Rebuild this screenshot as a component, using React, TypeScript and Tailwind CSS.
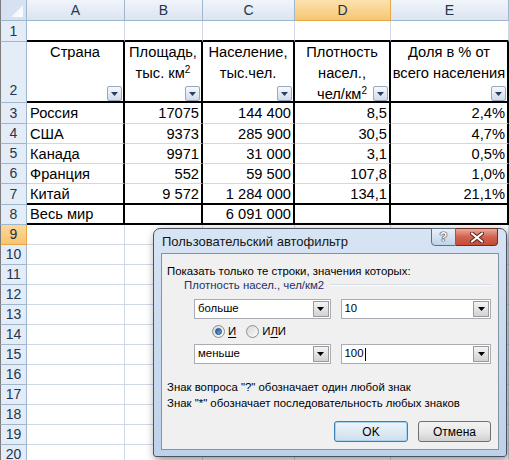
import React from "react";

// Строка данных таблицы
interface DataRow {
  n: string;
  h: string;
  cells: string[];
  thickBottom: boolean;
}

const colHeaders = ["A", "B", "C", "D", "E"];

const dataRows: DataRow[] = [
  { n: "3", h: "h-[21px]", cells: ["Россия", "17075", "144 400", "8,5", "2,4%"], thickBottom: false },
  { n: "4", h: "h-[20px]", cells: ["США", "9373", "285 900", "30,5", "4,7%"], thickBottom: false },
  { n: "5", h: "h-[20px]", cells: ["Канада", "9971", "31 000", "3,1", "0,5%"], thickBottom: false },
  { n: "6", h: "h-[20px]", cells: ["Франция", "552", "59 500", "107,8", "1,0%"], thickBottom: false },
  { n: "7", h: "h-[21px]", cells: ["Китай", "9 572", "1 284 000", "134,1", "21,1%"], thickBottom: true },
  { n: "8", h: "h-[20px]", cells: ["Весь мир", "", "6 091 000", "", ""], thickBottom: true },
];

const emptyRows = ["9", "10", "11", "12", "13", "14", "15", "16", "17", "18", "19", "20"];

function RowHead({ n, h, active, bottom }: { n: string; h: string; active?: boolean; bottom?: boolean }) {
  return (
    <div
      className={`${h} flex justify-center ${bottom ? "items-end pb-[1px]" : "items-center"} border-l border-l-[#7b7b7b] border-r border-b text-[14px] ${
        active
          ? "bg-gradient-to-b from-[#fbd99a] to-[#f7c46c] border-r-[#e9a649] border-b-[#e9a649] text-[#1d2f48]"
          : "bg-[#e4ecf7] border-r-[#9eb6ce] border-b-[#9eb6ce] text-[#22364f]"
      }`}
    >
      {n}
    </div>
  );
}

function Cell({
  h,
  text,
  right,
  thickR,
  thickB,
}: {
  h: string;
  text?: string;
  right?: boolean;
  thickR?: boolean;
  thickB?: boolean;
}) {
  const r = thickR ? "border-r-2 border-r-black" : "border-r border-r-[#d0d7e5]";
  const b = thickB ? "border-b-2 border-b-black" : "border-b border-b-[#d0d7e5]";
  const a = right ? "justify-end pr-[2px]" : "justify-start pl-[3px]";
  return (
    <div className={`${h} ${r} ${b} ${a} flex items-center bg-white whitespace-nowrap overflow-hidden text-[14.67px] text-black`}>
      {text}
    </div>
  );
}

function FilterBtn() {
  return (
    <div className="absolute right-[1px] bottom-0 w-[15px] h-[15px] border border-[#97a8c1] rounded-[2px] bg-gradient-to-b from-[#f7f9fc] to-[#d2dbe8] flex items-center justify-center">
      <svg width="7" height="4" viewBox="0 0 7 4">
        <path d="M0 0h7L3.5 4z" fill="#2b3d60" />
      </svg>
    </div>
  );
}

function HeadCell({ children }: { children: React.ReactNode }) {
  return (
    <div className="relative h-[61px] border-r-2 border-r-black border-b-2 border-b-black bg-white text-center text-[14.67px] leading-[21px] text-black whitespace-nowrap">
      {children}
      <FilterBtn />
    </div>
  );
}

function Combo({ w, text, caret }: { w: string; text: string; caret?: boolean }) {
  return (
    <div className={`${w} h-[20px] border border-[#a9acb2] bg-white flex items-stretch`}>
      <div className="flex-1 flex items-center pl-[3px]">
        {text}
        {caret && <span className="inline-block w-[1px] h-[13px] bg-black ml-[1px]" />}
      </div>
      <div className="w-[16px] m-[1px] border border-[#9a9a9a] bg-gradient-to-b from-[#f4f4f4] to-[#d2d2d2] flex items-center justify-center">
        <svg width="7" height="4" viewBox="0 0 7 4">
          <path d="M0 0h7L3.5 4z" fill="#000" />
        </svg>
      </div>
    </div>
  );
}

function Radio({ checked }: { checked?: boolean }) {
  return (
    <div className="w-[13px] h-[13px] rounded-full border border-[#8d8f91] bg-gradient-to-br from-[#d6d8da] to-[#fbfbfb] flex items-center justify-center">
      {checked && <div className="w-[7px] h-[7px] rounded-full bg-gradient-to-br from-[#1c5aa0] to-[#6fb0ea] border border-[#1f4c82]" />}
    </div>
  );
}

function Dialog() {
  return (
    <div className="absolute left-[153px] top-[228px] w-[354px] h-[229px] rounded-t-[7px] rounded-b-[3px] border border-[#4c535e] bg-gradient-to-b from-[#d7e4f4] to-[#bdd2ea] shadow-[2px_3px_10px_rgba(0,0,0,0.45)] flex flex-col font-['Liberation_Sans',Arial,sans-serif]">
      {/* Заголовок окна */}
      <div className="h-[24px] flex items-start justify-between pl-[8px] pr-[8px] shrink-0">
        <span className="text-[13px] leading-[25px] text-[#161616] whitespace-nowrap">Пользовательский автофильтр</span>
        <div className="flex -mt-[1px]">
          <div className="w-[25px] h-[18px] rounded-bl-[4px] border border-[#5e6f84] bg-gradient-to-b from-[#e9f0f8] to-[#c2d3e8] flex items-center justify-center text-[13px] font-bold text-white [text-shadow:0_0_1px_#222,0_0_1px_#222,0_0_1px_#222]">
            ?
          </div>
          <div className="w-[42px] h-[18px] rounded-br-[4px] border border-l-0 border-[#6b2e26] bg-gradient-to-b from-[#eaa999] via-[#d2624e] to-[#c44b36] flex items-center justify-center">
            <svg width="14" height="11" viewBox="0 0 14 11">
              <path d="M2 1.5L12 9.5M12 1.5L2 9.5" stroke="#5a1f17" strokeWidth="4" strokeLinecap="round" />
              <path d="M2 1.5L12 9.5M12 1.5L2 9.5" stroke="#ffffff" strokeWidth="2.2" strokeLinecap="round" />
            </svg>
          </div>
        </div>
      </div>
      {/* Клиентская область */}
      <div className="mx-[7px] mb-[6px] flex-1 border border-[#8393a6] bg-[#f0f0f0] pl-[5px] pr-[7px] pt-[10px] text-[11.4px] text-black">
        <p className="leading-[14px] whitespace-nowrap">Показать только те строки, значения которых:</p>
        <div className="flex items-center pl-[17px] leading-[14px]">
          <span className="text-[#1f2f6a] whitespace-nowrap">Плотность насел., чел/км2</span>
          <div className="flex-1 ml-[6px] border-t border-t-[#d2dbe3] border-b border-b-white" />
        </div>
        <div className="flex pl-[27px] mt-[7px] gap-[10px]">
          <Combo w="w-[137px]" text="больше" />
          <Combo w="w-[151px]" text="10" />
        </div>
        <div className="flex items-center pl-[45px] mt-[6px] h-[13px]">
          <Radio checked />
          <span className="ml-[3px] underline underline-offset-2">И</span>
          <div className="ml-[10px]">
            <Radio />
          </div>
          <span className="ml-[3px]">
            И<span className="underline underline-offset-2">Л</span>И
          </span>
        </div>
        <div className="flex pl-[27px] mt-[6px] gap-[10px]">
          <Combo w="w-[137px]" text="меньше" />
          <Combo w="w-[151px]" text="100" caret />
        </div>
        <p className="mt-[15px] leading-[16px] whitespace-nowrap">Знак вопроса "?" обозначает один любой знак</p>
        <p className="leading-[16px] whitespace-nowrap">Знак "*" обозначает последовательность любых знаков</p>
        <div className="flex justify-end gap-[10px] mt-[10px]">
          <button className="w-[74px] h-[21px] rounded-[3px] border border-[#3c7fb1] bg-gradient-to-b from-[#eef5fb] to-[#cfdeec] shadow-[inset_0_0_0_1px_#a9d4f0] text-[12px]">
            OK
          </button>
          <button className="w-[73px] h-[21px] rounded-[3px] border border-[#707070] bg-gradient-to-b from-[#f3f3f3] via-[#e8e8e8] to-[#d0d0d0] text-[12px]">
            Отмена
          </button>
        </div>
      </div>
    </div>
  );
}

export default function App() {
  return (
    <div className="relative w-[509px] h-[460px] overflow-hidden bg-white font-['Liberation_Sans',Arial,sans-serif]">
      <div className="grid grid-cols-[27px_98px_78px_92px_96px_118px]">
        {/* Заголовки столбцов */}
        <div className="h-[21px] border-l border-l-[#7b7b7b] border-r border-r-[#9eb6ce] border-b border-b-[#9eb6ce] bg-[#d6e2f2] flex items-end justify-end p-[3px]">
          <svg width="12" height="12" viewBox="0 0 12 12">
            <defs>
              <linearGradient id="tri" x1="0" y1="0" x2="1" y2="1">
                <stop offset="0" stopColor="#e6edf7" />
                <stop offset="1" stopColor="#ffffff" />
              </linearGradient>
            </defs>
            <path d="M12 0V12H0z" fill="url(#tri)" />
          </svg>
        </div>
        {colHeaders.map((c) => (
          <div
            key={c}
            className={`h-[21px] flex items-center justify-center border-r border-b text-[14px] ${
              c === "D"
                ? "bg-gradient-to-b from-[#fbe2ad] to-[#f6c773] border-r-[#e9a649] border-b-[#e9a649] text-[#1d2f48]"
                : "bg-gradient-to-b from-[#f1f5fb] to-[#dbe4f0] border-r-[#9eb6ce] border-b-[#9eb6ce] text-[#22364f]"
            }`}
          >
            {c}
          </div>
        ))}

        {/* Строка 1 */}
        <RowHead n="1" h="h-[21px]" />
        {colHeaders.map((c) => (
          <Cell key={c} h="h-[21px]" thickB />
        ))}

        {/* Строка 2: шапка таблицы */}
        <RowHead n="2" h="h-[61px]" bottom />
        <HeadCell>Страна</HeadCell>
        <HeadCell>
          Площадь,
          <br />
          тыс. км<sup className="text-[10px] leading-none">2</sup>
        </HeadCell>
        <HeadCell>
          Население,
          <br />
          тыс.чел.
        </HeadCell>
        <HeadCell>
          Плотность
          <br />
          насел.,
          <br />
          чел/км<sup className="text-[10px] leading-none">2</sup>
        </HeadCell>
        <HeadCell>
          Доля в % от
          <br />
          всего населения
        </HeadCell>

        {/* Данные */}
        {dataRows.map((row) => (
          <React.Fragment key={row.n}>
            <RowHead n={row.n} h={row.h} />
            {row.cells.map((t, i) => (
              <Cell key={i} h={row.h} text={t} right={i > 0} thickR thickB={row.thickBottom} />
            ))}
          </React.Fragment>
        ))}

        {/* Пустые строки */}
        {emptyRows.map((n) => (
          <React.Fragment key={n}>
            <RowHead n={n} h="h-[20px]" active={n === "9"} />
            {colHeaders.map((c) => (
              <Cell key={c} h="h-[20px]" />
            ))}
          </React.Fragment>
        ))}
      </div>

      <Dialog />
    </div>
  );
}
